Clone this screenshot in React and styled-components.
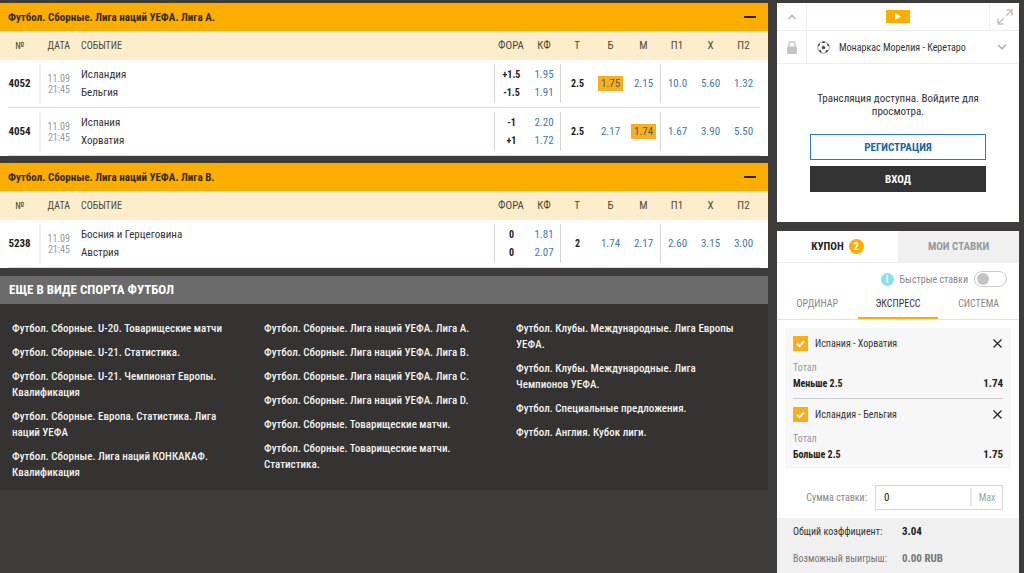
import React, { useState } from 'react'
import styled, { createGlobalStyle } from 'styled-components'

const GlobalStyle = createGlobalStyle`
* {
  box-sizing: border-box;
}
body {
  margin: 0;
  background: #3d3c3a;
  color: #333;
  font-family: "Roboto Condensed", Roboto, "Liberation Sans Narrow", sans-serif;
  font-size: 11px;
}
button, input {
  font-family: inherit;
  margin: 0;
}
button {
  padding: 0;
  border: none;
  background: none;
  cursor: pointer;
}
h2, p, ul, dl, dd {
  margin: 0;
  padding: 0;
}
`

const leagues = [
  {
    title: 'Футбол. Сборные. Лига наций УЕФА. Лига A.',
    matches: [
      {
        id: '4052', date: '11.09', time: '21:45', teams: ['Исландия', 'Бельгия'],
        fora: ['+1.5', '-1.5'], kf: ['1.95', '1.91'], total: '2.5',
        over: '1.75', under: '2.15', win1: '10.0', draw: '5.60', win2: '1.32', picked: 'over',
      },
      {
        id: '4054', date: '11.09', time: '21:45', teams: ['Испания', 'Хорватия'],
        fora: ['-1', '+1'], kf: ['2.20', '1.72'], total: '2.5',
        over: '2.17', under: '1.74', win1: '1.67', draw: '3.90', win2: '5.50', picked: 'under',
      },
    ],
  },
  {
    title: 'Футбол. Сборные. Лига наций УЕФА. Лига B.',
    matches: [
      {
        id: '5238', date: '11.09', time: '21:45', teams: ['Босния и Герцеговина', 'Австрия'],
        fora: ['0', '0'], kf: ['1.81', '2.07'], total: '2',
        over: '1.74', under: '2.17', win1: '2.60', draw: '3.15', win2: '3.00',
      },
    ],
  },
]

const moreLinks = [
  [
    'Футбол. Сборные. U-20. Товарищеские матчи',
    'Футбол. Сборные. U-21. Статистика.',
    'Футбол. Сборные. U-21. Чемпионат Европы. Квалификация',
    'Футбол. Сборные. Европа. Статистика. Лига наций УЕФА',
    'Футбол. Сборные. Лига наций КОНКАКАФ. Квалификация',
  ],
  [
    'Футбол. Сборные. Лига наций УЕФА. Лига A.',
    'Футбол. Сборные. Лига наций УЕФА. Лига B.',
    'Футбол. Сборные. Лига наций УЕФА. Лига C.',
    'Футбол. Сборные. Лига наций УЕФА. Лига D.',
    'Футбол. Сборные. Товарищеские матчи.',
    'Футбол. Сборные. Товарищеские матчи. Статистика.',
  ],
  [
    'Футбол. Клубы. Международные. Лига Европы УЕФА.',
    'Футбол. Клубы. Международные. Лига Чемпионов УЕФА.',
    'Футбол. Специальные предложения.',
    'Футбол. Англия. Кубок лиги.',
  ],
]

const bets = [
  { id: 'esp', match: 'Испания - Хорватия', pick: 'Меньше 2.5', odd: '1.74' },
  { id: 'isl', match: 'Исландия - Бельгия', pick: 'Больше 2.5', odd: '1.75' },
]

function League({ title, matches }) {
  return (
    <LeagueBox>
      <LeagueHeader>
        <LeagueTitle>{title}</LeagueTitle>
        <Collapse type="button" aria-label="Свернуть" />
      </LeagueHeader>
      <Table>
        <colgroup>
          <Col $w={39} />
          <Col $w={42} />
          <col />
          <Col $w={34} />
          <Col $w={32} />
          <Col $w={34} />
          <Col $w={33} />
          <Col $w={33} />
          <Col $w={34} />
          <Col $w={33} />
          <Col $w={41} />
        </colgroup>
        <thead>
          <tr>
            <Th $small>№</Th>
            <Th $small $align="right"><DateHead>ДАТА</DateHead></Th>
            <Th $small $align="left">СОБЫТИЕ</Th>
            <Th>ФОРА</Th>
            <Th>КФ</Th>
            <Th>Т</Th>
            <Th>Б</Th>
            <Th>М</Th>
            <Th>П1</Th>
            <Th>Х</Th>
            <Th $last>П2</Th>
          </tr>
        </thead>
        <tbody>
          {matches.map(m => (
            <Row key={m.id}>
              <Td><Num>{m.id}</Num></Td>
              <Td>
                <DateCell>
                  <span>{m.date}</span>
                  <span>{m.time}</span>
                </DateCell>
              </Td>
              <Td>
                <Teams>
                  <span>{m.teams[0]}</span>
                  <span>{m.teams[1]}</span>
                </Teams>
              </Td>
              <Td>
                <Pair $line>
                  <b>{m.fora[0]}</b>
                  <b>{m.fora[1]}</b>
                </Pair>
              </Td>
              <Td>
                <Pair>
                  <Odd type="button">{m.kf[0]}</Odd>
                  <Odd type="button">{m.kf[1]}</Odd>
                </Pair>
              </Td>
              <Td><Single $line><b>{m.total}</b></Single></Td>
              <Td><Single><Odd type="button" $picked={m.picked === 'over'}>{m.over}</Odd></Single></Td>
              <Td><Single><Odd type="button" $picked={m.picked === 'under'}>{m.under}</Odd></Single></Td>
              <Td><Single $line><Odd type="button">{m.win1}</Odd></Single></Td>
              <Td><Single><Odd type="button">{m.draw}</Odd></Single></Td>
              <Td $last><Single><Odd type="button">{m.win2}</Odd></Single></Td>
            </Row>
          ))}
        </tbody>
      </Table>
    </LeagueBox>
  )
}

function Ball() {
  return (
    <svg width="13" height="13" viewBox="0 0 13 13" aria-hidden="true">
      <circle cx="6.5" cy="6.5" r="5.8" fill="#fff" stroke="#888" strokeWidth="0.8" />
      <path d="M6.5 4.4 8.5 5.9 7.7 8.2H5.3L4.5 5.9z" fill="#555" />
      <path d="M4.5.9 6.5 2.2 8.5.9 6.5.4zM.8 5.4 2.7 4.6 3 2.3 1.4 3.6zM12.2 5.4 10.3 4.6 10 2.3 11.6 3.6zM1.6 9.2 3.4 9 4.6 10.8 4.2 12zM11.4 9.2 9.6 9 8.4 10.8 8.8 12z" fill="#333" />
    </svg>
  )
}

function Broadcast() {
  return (
    <Panel>
      <PlayerBar>
        <IconCell type="button" aria-label="Свернуть" $side="right">
          <svg width="10" height="6" viewBox="0 0 10 6" fill="none" stroke="#bbb" strokeWidth="1.6">
            <path d="M1.5 5 5 1.5 8.5 5" />
          </svg>
        </IconCell>
        <PlayCell>
          <PlayButton type="button" aria-label="Смотреть">
            <svg width="6" height="7" viewBox="0 0 6 7">
              <path d="M0 0 6 3.5 0 7z" fill="#fff" />
            </svg>
          </PlayButton>
        </PlayCell>
        <IconCell type="button" aria-label="На весь экран" $side="left">
          <svg width="16" height="16" viewBox="0 0 16 16" fill="none" stroke="#c4c4c4" strokeWidth="1.6">
            <path d="M9.2 6.8 15 1M9.5 1H15V6.5M6.8 9.2 1 15M1 9.5V15H6.5" />
          </svg>
        </IconCell>
      </PlayerBar>
      <MatchBar>
        <IconCell type="button" aria-label="Закрепить" $side="right">
          <svg width="10" height="13" viewBox="0 0 10 13">
            <path d="M2 6V3.6a3 3 0 0 1 6 0V6" fill="none" stroke="#c4c4c4" strokeWidth="1.5" />
            <rect y="5.5" width="10" height="7.5" rx="1" fill="#c4c4c4" />
          </svg>
        </IconCell>
        <MatchSelect type="button">
          <Ball />
          <span>Монаркас Морелия - Керетаро</span>
          <svg width="10" height="6" viewBox="0 0 10 6" fill="none" stroke="#aaa" strokeWidth="1.5">
            <path d="M1.2 1 5 4.8 8.8 1" />
          </svg>
        </MatchSelect>
      </MatchBar>
      <LoginBox>
        <p>Трансляция доступна. Войдите для просмотра.</p>
        <ActionButton type="button">РЕГИСТРАЦИЯ</ActionButton>
        <ActionButton type="button" $dark>ВХОД</ActionButton>
      </LoginBox>
    </Panel>
  )
}

function Bet({ id, match, pick, odd }) {
  return (
    <BetItem>
      <BetTop>
        <CheckLabel htmlFor={id}>
          <CheckBox>
            <Check id={id} type="checkbox" defaultChecked />
            <svg width="9" height="8" viewBox="0 0 9 8" fill="none" stroke="#fff" strokeWidth="2">
              <path d="M1 3.8 3.5 6.2 8 1.4" />
            </svg>
          </CheckBox>
          {match}
        </CheckLabel>
        <Close type="button" aria-label="Удалить">
          <svg width="9" height="9" viewBox="0 0 9 9" stroke="#222" strokeWidth="1.2">
            <path d="M.5.5 8.5 8.5M8.5.5.5 8.5" />
          </svg>
        </Close>
      </BetTop>
      <BetType>Тотал</BetType>
      <BetPick>
        <b>{pick}</b>
        <BetOdd>{odd}</BetOdd>
      </BetPick>
    </BetItem>
  )
}

function Coupon() {
  const [mode, setMode] = useState('ЭКСПРЕСС')
  const [sum, setSum] = useState('0')

  return (
    <CouponPanel>
      <Tabs>
        <Tab type="button" $active>КУПОН <Badge>2</Badge></Tab>
        <Tab type="button">МОИ СТАВКИ</Tab>
      </Tabs>
      <QuickRow>
        <Info>i</Info>
        <label htmlFor="quick">Быстрые ставки</label>
        <Toggle id="quick" type="checkbox" role="switch" />
      </QuickRow>
      <Modes>
        {['ОРДИНАР', 'ЭКСПРЕСС', 'СИСТЕМА'].map(name => (
          <Mode key={name} type="button" $active={name === mode} onClick={() => setMode(name)}>{name}</Mode>
        ))}
      </Modes>
      <Bets>
        {bets.map(bet => <Bet key={bet.id} {...bet} />)}
      </Bets>
      <SumRow>
        <label htmlFor="sum">Сумма ставки:</label>
        <SumBox>
          <SumInput id="sum" type="text" value={sum} onChange={e => setSum(e.target.value)} />
          <Max type="button">Max</Max>
        </SumBox>
      </SumRow>
      <Summary>
        <dt>Общий коэффициент:</dt>
        <dd>3.04</dd>
        <Muted as="dt">Возможный выигрыш:</Muted>
        <Muted as="dd">0.00 RUB</Muted>
      </Summary>
    </CouponPanel>
  )
}

export default function App() {
  return (
    <>
      <GlobalStyle />
      <Page>
        <Main>
          {leagues.map(l => <League key={l.title} {...l} />)}
          <More>
            <MoreTitle>ЕЩЕ В ВИДЕ СПОРТА ФУТБОЛ</MoreTitle>
            <MoreColumns>
              {moreLinks.map((links, i) => (
                <LinkList key={i}>
                  {links.map(text => <li key={text}><a href="#">{text}</a></li>)}
                </LinkList>
              ))}
            </MoreColumns>
          </More>
        </Main>
        <Side>
          <Broadcast />
          <Coupon />
        </Side>
      </Page>
    </>
  )
}

const Page = styled.div`
display: grid;
grid-template-columns: minmax(0, 1fr) 242px;
gap: 9px;
min-height: 100vh;
padding: 3px 5px 0 0;
`

const Main = styled.main`
display: flex;
flex-direction: column;
gap: 7px;
`

const Side = styled.aside`
display: flex;
flex-direction: column;
gap: 9px;
`

const LeagueBox = styled.section`
background: #fff;
`

const LeagueHeader = styled.div`
display: flex;
align-items: center;
justify-content: space-between;
height: 28px;
padding: 0 12px 0 8px;
background: #fbae00;
`

const LeagueTitle = styled.h2`
font-size: 11px;
font-weight: 700;
color: #33290f;
`

const Collapse = styled.button`
width: 12px;
height: 12px;
background: linear-gradient(#2b2209, #2b2209) center / 12px 2px no-repeat;
`

const Table = styled.table`
width: 100%;
table-layout: fixed;
border-collapse: collapse;
`

const Col = styled.col`
width: ${p => p.$w}px;
`

const Th = styled.th`
height: 29px;
padding: 0 ${p => p.$last ? '8px' : 0} 0 0;
background: #fdedcb;
color: #4d483d;
font-size: ${p => p.$small ? '10px' : '11px'};
font-weight: 400;
white-space: nowrap;
text-align: ${p => p.$align || 'center'};
`

const DateHead = styled.div`
padding-right: 11px;
`

const Row = styled.tr`
background: linear-gradient(#ddd, #ddd) center bottom / calc(100% - 16px) 1px no-repeat;
`

const Td = styled.td`
height: 48px;
padding: 4px ${p => p.$last ? '8px' : 0} 5px 0;
text-align: center;
`

const Num = styled.b`
color: #222;
`

const DateCell = styled.div`
display: flex;
flex-direction: column;
justify-content: center;
height: 39px;
padding-right: 11px;
border-left: 2px solid #eee;
color: #999;
font-size: 10px;
line-height: 11px;
text-align: right;
`

const Teams = styled.div`
display: flex;
flex-direction: column;
line-height: 18px;
text-align: left;
`

const Pair = styled.div`
display: flex;
flex-direction: column;
align-items: center;
justify-content: center;
height: 39px;
border-left: ${p => p.$line ? '1px solid #d6d6d6' : 'none'};
color: #222;
font-size: 10px;
line-height: 18px;
`

const Single = styled(Pair)`
flex-direction: row;
`

const Odd = styled.button`
padding: 0 3px;
background: ${p => p.$picked ? '#f7ae20' : 'none'};
color: ${p => p.$picked ? '#555f60' : '#3f7ba3'};
font-size: 11px;
line-height: ${p => p.$picked ? '15px' : '18px'};
`

const More = styled.section`
margin-top: 1px;
background: #343331;
`

const MoreTitle = styled.h2`
padding: 0 9px;
background: #6b6b6b;
color: #fff;
font-size: 13px;
font-weight: 700;
line-height: 28px;
`

const MoreColumns = styled.div`
display: grid;
grid-template-columns: repeat(3, minmax(0, 1fr));
padding: 17px 0 9px 12px;
`

const LinkList = styled.ul`
display: flex;
flex-direction: column;
gap: 8px;
padding-right: 20px;
list-style: none;
font-weight: 500;
line-height: 16px;

a {
  color: #f2f2f2;
  text-decoration: none;
}
`

const Panel = styled.section`
padding-bottom: 30px;
background: #fff;
`

const PlayerBar = styled.div`
display: flex;
height: 28px;
border-bottom: 1px solid #eee;
`

const MatchBar = styled(PlayerBar)`
height: 33px;
`

const IconCell = styled.button`
display: flex;
align-items: center;
justify-content: center;
flex: none;
width: 30px;
border-${p => p.$side}: 1px solid #eee;
`

const PlayCell = styled.div`
display: flex;
flex: 1;
align-items: center;
justify-content: center;
`

const PlayButton = styled.button`
display: flex;
align-items: center;
justify-content: center;
width: 24px;
height: 13px;
background: #fbae00;
`

const MatchSelect = styled.button`
display: flex;
flex: 1;
align-items: center;
gap: 9px;
padding: 0 12px 0 10px;
color: #333;
font-size: 10px;
text-align: left;

span {
  flex: 1;
  white-space: nowrap;
}
`

const LoginBox = styled.div`
display: flex;
flex-direction: column;
gap: 6px;
padding: 28px 33px 0;

p {
  padding-bottom: 10px;
  line-height: 13px;
  text-align: center;
}
`

const ActionButton = styled.button`
height: 26px;
border: 1px solid ${p => p.$dark ? '#333' : '#2f7cb4'};
background: ${p => p.$dark ? '#333' : '#fff'};
color: ${p => p.$dark ? '#fff' : '#1668a3'};
font-size: 11px;
font-weight: 700;
`

const CouponPanel = styled.section`
display: flex;
flex: 1;
flex-direction: column;
background: #fff;
`

const Tabs = styled.div`
display: grid;
grid-template-columns: 1fr 1fr;
height: 32px;
`

const Tab = styled.button`
display: flex;
align-items: center;
justify-content: center;
gap: 5px;
border-bottom: 1px solid #eee;
background: ${p => p.$active ? '#fff' : '#f0f0f0'};
color: ${p => p.$active ? '#222' : '#999'};
font-size: 11px;
font-weight: 700;
`

const Badge = styled.span`
width: 15px;
height: 15px;
border-radius: 50%;
background: #fbae00;
color: #fff;
font-size: 10px;
line-height: 15px;
`

const QuickRow = styled.div`
display: flex;
align-items: center;
justify-content: flex-end;
gap: 6px;
height: 32px;
padding-right: 12px;
color: #888;
font-size: 10px;
`

const Info = styled.span`
width: 13px;
height: 13px;
border-radius: 50%;
background: #8ddcf2;
color: #fff;
font-size: 10px;
font-weight: 700;
line-height: 13px;
text-align: center;
`

const Toggle = styled.input`
appearance: none;
width: 33px;
height: 16px;
border: 1px solid #ccc;
border-radius: 8px;
background: #fff;

&::before {
  content: "";
  display: block;
  width: 12px;
  height: 12px;
  margin: 1px 2px;
  border-radius: 50%;
  background: #c4c4c4;
}
`

const Modes = styled.div`
display: grid;
grid-template-columns: repeat(3, 1fr);
height: 25px;
border-bottom: 1px solid #e2e2e2;
`

const Mode = styled.button`
padding-bottom: 6px;
border-bottom: 2px solid ${p => p.$active ? '#fbae00' : 'transparent'};
color: ${p => p.$active ? '#333' : '#888'};
font-size: 10px;
`

const Bets = styled.div`
margin: 8px 8px 0;
padding: 0 8px;
background: #f7f7f7;
`

const BetItem = styled.div`
padding: 8px 0 6px;

& + & {
  border-top: 1px solid #ccc;
}
`

const BetTop = styled.div`
display: flex;
align-items: center;
justify-content: space-between;
height: 15px;
`

const CheckLabel = styled.label`
display: flex;
align-items: center;
gap: 7px;
font-size: 10px;
`

const CheckBox = styled.span`
display: grid;
place-items: center;

> * {
  grid-area: 1 / 1;
}
`

const Check = styled.input`
appearance: none;
width: 15px;
height: 15px;
margin: 0;
background: #f9ae1d;
`

const Close = styled.button`
display: flex;
padding: 1px;
`

const BetType = styled.div`
padding-top: 9px;
color: #999;
font-size: 10px;
line-height: 16px;
`

const BetPick = styled.div`
display: flex;
justify-content: space-between;
color: #222;
font-size: 10px;
line-height: 16px;
`

const BetOdd = styled.b`
font-size: 11px;
`

const SumRow = styled.div`
display: flex;
align-items: center;
justify-content: flex-end;
gap: 8px;
padding: 16px 16px 8px;
color: #888;
font-size: 10px;
`

const SumBox = styled.div`
display: flex;
align-items: center;
width: 128px;
height: 25px;
border: 1px solid #d6d6d6;
`

const SumInput = styled.input`
width: 94px;
padding: 0 8px;
border: none;
outline: none;
background: none;
color: #222;
font-size: 11px;
`

const Max = styled.button`
flex: 1;
height: 19px;
border-left: 2px solid #e8e8e8;
color: #93a5b3;
font-size: 10px;
`

const Summary = styled.dl`
display: grid;
flex: 1;
grid-template-columns: 109px 1fr;
grid-auto-rows: 27px;
align-items: center;
padding: 0 16px;
background: #f0f0f0;
font-size: 10px;

dd {
  color: #222;
  font-size: 11px;
  font-weight: 700;
}
`

const Muted = styled.div`
&& {
  color: #777;
}
`
